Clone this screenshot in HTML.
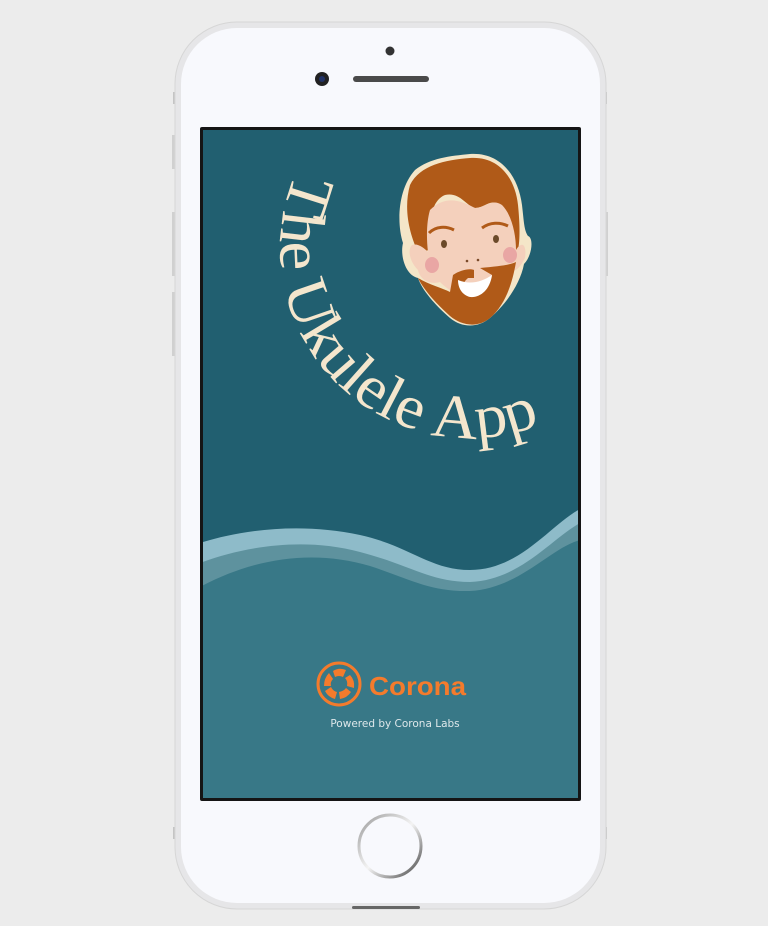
<!DOCTYPE html>
<html><head><meta charset="utf-8"><style>
html,body{margin:0;padding:0;background:#ececec;width:768px;height:926px;overflow:hidden}
svg{display:block}
</style></head><body>
<svg width="768" height="926" viewBox="0 0 768 926" xmlns="http://www.w3.org/2000/svg">
<defs>
<linearGradient id="hb" x1="0" y1="0" x2="1" y2="1"><stop offset="0" stop-color="#999"/><stop offset="0.5" stop-color="#f4f4f4"/><stop offset="1" stop-color="#444"/></linearGradient>
<clipPath id="scr"><rect x="203" y="130" width="375" height="668"/></clipPath>
</defs>
<rect width="768" height="926" fill="#ececec"/>
<rect x="173" y="92" width="4" height="12" fill="#c4c4c4"/>
<rect x="172" y="135" width="4" height="34" fill="#d0d0d0"/>
<rect x="172" y="212" width="4" height="64" fill="#d0d0d0"/>
<rect x="172" y="292" width="4" height="64" fill="#d0d0d0"/>
<rect x="603" y="92" width="4" height="12" fill="#c4c4c4"/>
<rect x="604" y="212" width="4" height="64" fill="#d0d0d0"/>
<rect x="173" y="827" width="4" height="12" fill="#c4c4c4"/>
<rect x="603" y="827" width="4" height="12" fill="#c4c4c4"/>
<rect x="175" y="22" width="431" height="887" rx="62" fill="#e6e6e8" stroke="#d6d6d6" stroke-width="1"/>
<rect x="181" y="28" width="419" height="875" rx="56" fill="#f8f9fd"/>
<rect x="352" y="906" width="68" height="3" rx="1.5" fill="#666"/>
<circle cx="390" cy="51" r="4.5" fill="#333"/>
<circle cx="322" cy="79" r="7" fill="#222"/><circle cx="322" cy="79" r="3" fill="#223366"/>
<rect x="353" y="76" width="76" height="6" rx="3" fill="#4a4a4a"/>
<rect x="200" y="127" width="381" height="674" rx="2" fill="#151515"/>
<g clip-path="url(#scr)">
<rect x="200" y="128" width="380" height="672" fill="#215f70"/>
<path d="M200 543 C240 530 300 522 360 535 C410 546 430 570 470 570 C520 570 550 525 580 509 L580 800 L200 800Z" fill="#8ebbc9"/>
<path d="M200 563 C240 548 300 536 360 552 C410 565 430 582 470 582 C520 580 550 540 580 523 L580 800 L200 800Z" fill="#5e929e"/>
<path d="M200 587 C250 560 310 548 370 566 C410 579 430 592 470 591 C520 588 550 548 580 540 L580 800 L200 800Z" fill="#387887"/>
</g>
<path id="arc" d="M296 172 A190 190 0 0 0 566 412" fill="none"/>
<text font-family="'Liberation Serif',serif" font-size="62" fill="#f4e6cd"><textPath href="#arc" textLength="448" lengthAdjust="spacingAndGlyphs">The Ukulele App</textPath></text>
<g>
<path d="M470 154 C500 152 518 175 522 205 C524 222 524 230 528 236 C534 238 532 256 524 264 C520 285 505 305 490 318 C478 328 462 328 450 318 C435 305 422 290 418 278 C405 275 400 255 403 243 C397 225 397 190 415 170 C430 158 450 156 470 154Z" fill="#f4e6c8"/>
<path d="M470 158 C498 156 515 177 518 205 C520 225 520 240 518 250 L512 250 C514 232 510 215 500 205 C490 198 485 208 475 208 C465 205 460 192 445 195 C432 200 428 220 430 250 L418 252 C410 235 403 210 410 185 C420 165 445 160 470 158Z" fill="#b05a18"/>
<path d="M430 210 C445 195 460 200 475 208 C485 208 492 198 502 205 C512 215 516 235 516 250 C522 240 527 245 525 258 C520 268 515 272 512 270 C508 290 495 300 480 302 C465 300 450 292 440 282 C430 285 420 280 418 270 C410 262 407 250 412 245 C418 243 424 248 428 252 C426 235 427 220 430 210Z" fill="#f4d0bc"/>
<path d="M418 278 C430 285 442 288 450 292 L453 275 C460 270 470 268 474 270 L474 278 L468 278 C460 285 462 292 472 294 C482 295 490 285 492 275 L480 268 C500 266 510 265 516 262 C512 285 505 305 490 318 C478 328 462 326 450 316 C438 305 425 292 418 278Z" fill="#b05a18"/>
<path d="M458 280 C470 285 482 282 492 275 C490 290 480 298 470 297 C462 295 458 288 458 280Z" fill="#fff"/>
<path d="M429 233 C436 226 446 226 454 230" stroke="#b05a18" stroke-width="3" fill="none"/>
<path d="M482 228 C490 222 500 222 508 226" stroke="#b05a18" stroke-width="3" fill="none"/>
<ellipse cx="444" cy="244" rx="3" ry="4" fill="#6b4a2a"/>
<ellipse cx="496" cy="239" rx="3" ry="4" fill="#6b4a2a"/>
<ellipse cx="432" cy="265" rx="7" ry="8" fill="#e9a6a4"/>
<ellipse cx="510" cy="255" rx="7" ry="8" fill="#e9a6a4"/>
<circle cx="467" cy="261" r="1.3" fill="#7a4a2a"/>
<circle cx="478" cy="260" r="1.3" fill="#7a4a2a"/>
</g>
<circle cx="339" cy="684" r="21" fill="none" stroke="#f47b2c" stroke-width="3"/>
<g fill="#f47b2c">
<path d="M333 671 Q339 667 346 670 L343 677 Q339 675 335 677Z"/>
<path d="M350 675 Q355 680 354 688 L347 686 Q348 681 345 678Z"/>
<path d="M351 692 Q347 698 340 699 L339 692 Q344 691 346 688Z"/>
<path d="M335 699 Q328 697 325 691 L331 687 Q333 691 337 692Z"/>
<path d="M324 686 Q324 678 329 673 L333 679 Q330 682 331 686Z"/>
</g>
<text x="369" y="695" font-family="'Liberation Sans',sans-serif" font-weight="bold" font-size="26" fill="#f47b2c" textLength="97" lengthAdjust="spacingAndGlyphs">Corona</text>
<text x="395" y="727" text-anchor="middle" font-family="'DejaVu Sans','Liberation Sans',sans-serif" font-size="10.5" fill="#dde7ea">Powered by Corona Labs</text>
<circle cx="390" cy="846" r="31" fill="none" stroke="url(#hb)" stroke-width="3"/>
</svg>
</body></html>
